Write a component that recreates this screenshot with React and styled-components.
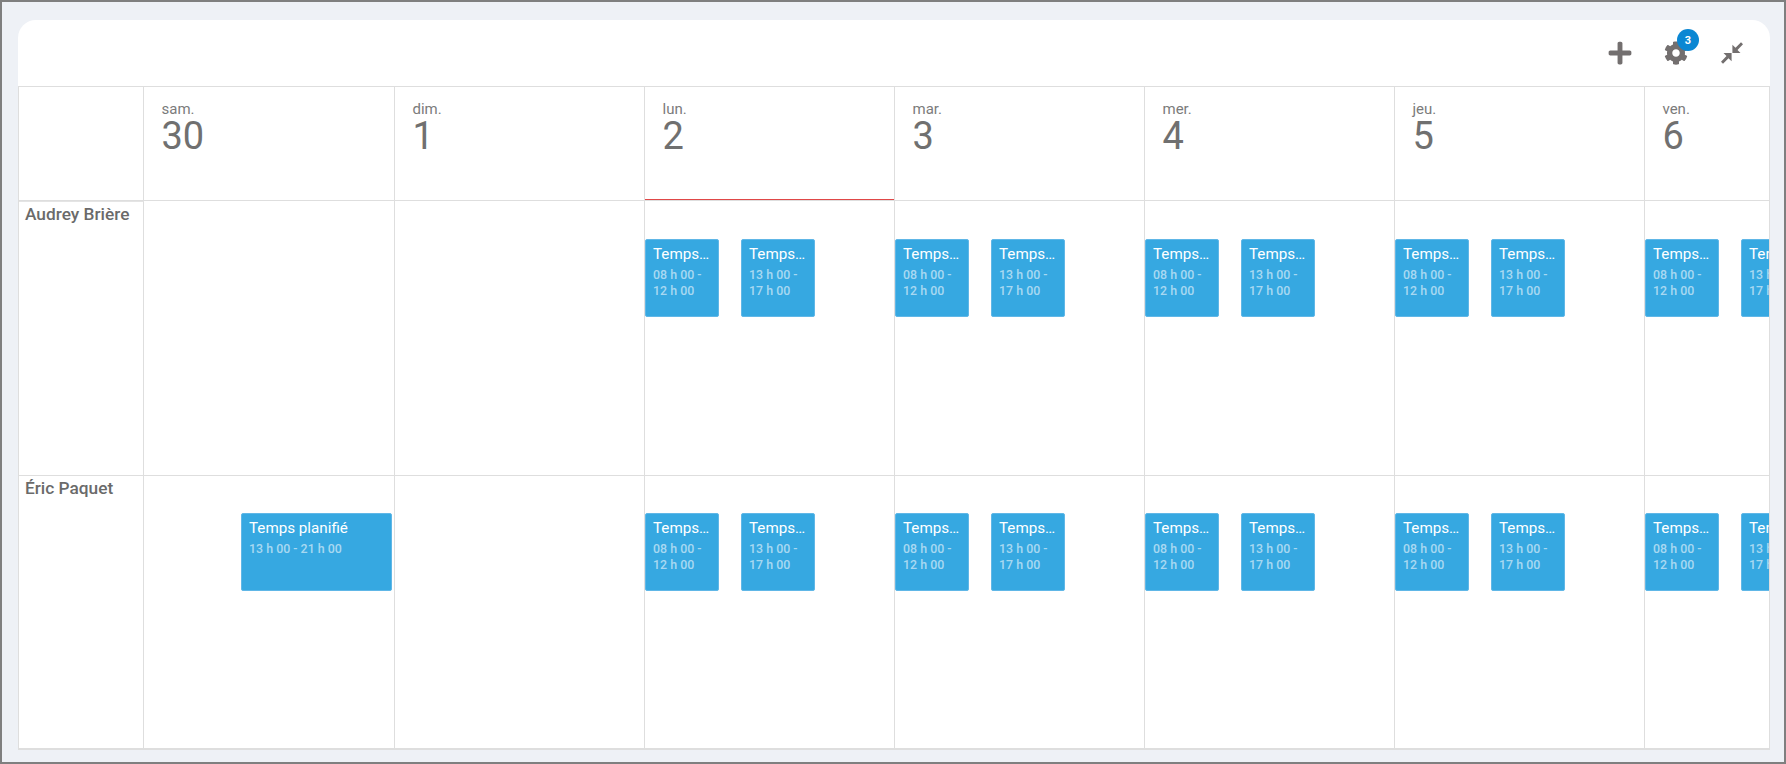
import React from "react";
import styled, { createGlobalStyle } from "styled-components";
import { FaCog, FaPlus } from "react-icons/fa";

const GlobalStyle = createGlobalStyle`
  html, body {
    margin: 0;
    padding: 0;
    background: #eef1f6;
  }
  * {
    box-sizing: border-box;
  }
`;

const Page = styled.div`
  display: flex;
  flex-direction: column;
  width: 1786px;
  height: 764px;
  padding: 18px 14px 12px 16px;
  background: #eef1f6;
  border: 2px solid #7f7f7f;
  font-family: Roboto, "Liberation Sans", sans-serif;
  color: #6d6d6d;
`;
const Card = styled.div`
  display: flex;
  flex-direction: column;
  flex: 1;
  min-height: 0;
  background: #fff;
  border-radius: 18px 18px 0 0;
  overflow: hidden;
`;
const Toolbar = styled.div`
  display: flex;
  align-items: center;
  justify-content: flex-end;
  height: 66px;
  padding: 0 26px 0 0;
  gap: 32px;
`;
const ToolButton = styled.div`
  position: relative;
  display: flex;
  align-items: center;
  justify-content: center;
  width: 24px;
  height: 24px;
  color: #736f6f;
`;
const PlusIcon = styled(FaPlus)`
  flex: none;
  width: 26px;
  height: 26px;
`;
const Badge = styled.span`
  position: absolute;
  top: -12px;
  right: -11px;
  display: flex;
  align-items: center;
  justify-content: center;
  width: 22px;
  height: 22px;
  border-radius: 50%;
  background: #0b87d3;
  color: #fff;
  font-size: 11px;
  font-weight: 700;
`;
const Frame = styled.div`
  flex: 1;
  min-height: 0;
  border: 1px solid #dedede;
  overflow: hidden;
`;
const Grid = styled.div`
  display: grid;
  grid-template-columns: 125px 251px repeat(6, 250px);
  grid-template-rows: 114px 275px 273px;
  width: 1751px;
`;
const Corner = styled.div`
  border-right: 1px solid #dedede;
  border-bottom: 1px solid #dedede;
`;
const DayHead = styled.div`
  position: relative;
  padding: 14px 0 0 17.5px;
  border-right: 1px solid #dedede;
  border-bottom: 1px solid #dedede;
  ${(p) => p.$today && `
    &:after {
      content: "";
      position: absolute;
      left: 0;
      right: 0;
      bottom: 0;
      height: 1px;
      background: #e04848;
    }
  `}
`;
const DayName = styled.div`
  font-size: 15px;
  line-height: 16px;
  color: #7b7b7b;
`;
const DayNumber = styled.div`
  font-size: 38px;
  line-height: 38px;
  color: #707070;
`;
const PersonCell = styled.div`
  padding: 2px 0 0 6px;
  font-size: 17.3px;
  line-height: 20px;
  font-weight: 500;
  color: #6a6a6a;
  border-right: 1px solid #dedede;
  border-bottom: 1px solid #dedede;
  white-space: nowrap;
  ${(p) => p.$first && `border-top: 1px solid #e4e4e4;`}
`;
const DayCell = styled.div`
  display: flex;
  gap: 22px;
  padding-top: ${(p) => p.$top}px;
  border-right: 1px solid #dedede;
  border-bottom: 1px solid #dedede;
  overflow: hidden;
`;
const Shift = styled.div`
  flex: none;
  width: ${(p) => (p.$wide ? 151 : 74)}px;
  height: 78px;
  margin-left: ${(p) => (p.$wide ? 97 : 0)}px;
  padding: 5px 7px;
  background: #36a8e1;
  border: 1px solid #60b7e7;
  border-radius: 2px;
`;
const ShiftTitle = styled.div`
  font-size: 15.2px;
  line-height: 18px;
  font-weight: 400;
  color: #fff;
  white-space: nowrap;
  overflow: hidden;
  text-overflow: ellipsis;
`;
const ShiftTime = styled.div`
  margin-top: 4px;
  font-size: 12.4px;
  line-height: 16px;
  font-weight: 500;
  color: rgba(255, 255, 255, 0.58);
`;

const CompressIcon = () => (
  <svg width="24" height="24" viewBox="0 0 24 24" fill="currentColor">
    <path d="M12.4 12V3.7l3.1 3.1 5.5-5.6 2 2-5.5 5.7 3 3.1z" />
    <path d="M11.6 12v8.3l-3.1-3.1-5.5 5.6-2-2 5.5-5.7-3-3.1z" />
  </svg>
);

const DAYS = [
  { name: "sam.", number: "30" },
  { name: "dim.", number: "1" },
  { name: "lun.", number: "2", today: true, work: true },
  { name: "mar.", number: "3", work: true },
  { name: "mer.", number: "4", work: true },
  { name: "jeu.", number: "5", work: true },
  { name: "ven.", number: "6", work: true },
];

const PEOPLE = [
  { name: "Audrey Brière", top: 38, first: true },
  { name: "Éric Paquet", top: 37, saturday: true },
];

const App = () => {
  return (
    <Page>
      <GlobalStyle />
      <Card>
        <Toolbar>
          <ToolButton>
            <PlusIcon />
          </ToolButton>
          <ToolButton>
            <FaCog size={24} />
            <Badge>3</Badge>
          </ToolButton>
          <ToolButton>
            <CompressIcon />
          </ToolButton>
        </Toolbar>
        <Frame>
          <Grid>
            <Corner />
            {DAYS.map((day) => (
              <DayHead key={day.number} $today={day.today}>
                <DayName>{day.name}</DayName>
                <DayNumber>{day.number}</DayNumber>
              </DayHead>
            ))}
            {PEOPLE.map((person) => (
              <React.Fragment key={person.name}>
                <PersonCell $first={person.first}>{person.name}</PersonCell>
                {DAYS.map((day, i) => (
                  <DayCell key={day.number} $top={person.top}>
                    {day.work && (
                      <>
                        <Shift>
                          <ShiftTitle>Temps planifié</ShiftTitle>
                          <ShiftTime>08 h 00 - 12 h 00</ShiftTime>
                        </Shift>
                        <Shift>
                          <ShiftTitle>Temps planifié</ShiftTitle>
                          <ShiftTime>13 h 00 - 17 h 00</ShiftTime>
                        </Shift>
                      </>
                    )}
                    {person.saturday && i === 0 && (
                      <Shift $wide>
                        <ShiftTitle>Temps planifié</ShiftTitle>
                        <ShiftTime>13 h 00 - 21 h 00</ShiftTime>
                      </Shift>
                    )}
                  </DayCell>
                ))}
              </React.Fragment>
            ))}
          </Grid>
        </Frame>
      </Card>
    </Page>
  );
};

export default App;
